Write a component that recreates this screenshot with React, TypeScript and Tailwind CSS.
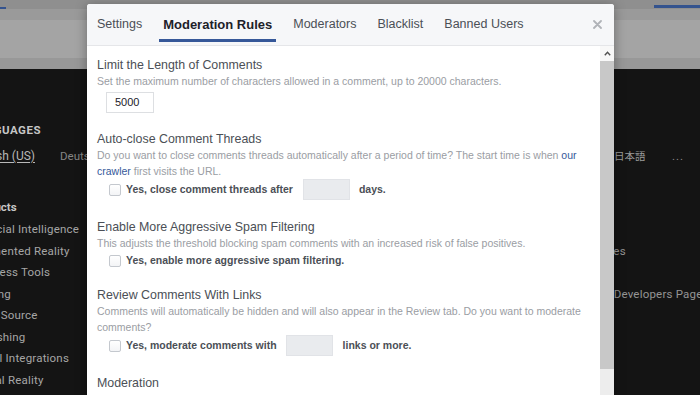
import React from 'react';

const tabs = ['Settings', 'Moderation Rules', 'Moderators', 'Blacklist', 'Banned Users'];

const products = [
  'Artificial Intelligence',
  'Augmented Reality',
  'Business Tools',
  'Gaming',
  'Open Source',
  'Publishing',
  'Social Integrations',
  'Virtual Reality',
];

const programs = ['Blog', 'Success Stories', 'Videos', 'Facebook for Developers Page', 'Events'];

const Check = () => (
  <span className="w-[12px] h-[12px] rounded-[2px] border border-[#c4c8ce] bg-gradient-to-b from-white to-[#f3f4f6] shrink-0" />
);

const GrayInput = ({ className = '' }: { className?: string }) => (
  <span className={`block w-[47px] h-[21px] bg-[#e9ebee] border border-[#e1e3e7] shrink-0 ${className}`} />
);

const App: React.FC = () => {
  return (
    <div className="relative w-[700px] h-[395px] overflow-hidden bg-[#141414] font-['Roboto',sans-serif]">
      {/* Page behind the dialog */}
      <div className="flex flex-col h-full">
        <div className="h-[9px] bg-[#8f8f8f] flex items-end justify-between">
          <span className="w-[6px] h-[2px] bg-[#34538e]" />
          <span className="w-[46px] h-[3px] mb-[1px] bg-[#34538e]" />
        </div>
        <div className="h-[11px] bg-[#9a9a9a]" />
        <div className="h-[38px] bg-[#a4a4a4]" />
        <div className="h-[11px] bg-[#989898]" />
        <div className="flex-1 bg-[#141414] pt-[53px] -ml-[30px] text-[11.5px]">
          <p className="leading-[16px] font-bold uppercase tracking-[0.5px] text-[#c6c6c6] text-[11.5px]">Languages</p>
          <div className="mt-[10px] grid grid-cols-[90px_554px_58px_auto] leading-[16px]">
            <span className="text-[#b8b8b8] underline underline-offset-2 text-[12px]">English (US)</span>
            <div className="flex gap-[28px] text-[#858585] whitespace-nowrap">
              <span>Deutsch</span>
              <span>Español</span>
              <span>Français (France)</span>
              <span>Italiano</span>
              <span>Português (Brasil)</span>
            </div>
            <span className="text-[#9c9c9c] text-[10.5px] font-['Noto_Sans_CJK_JP',sans-serif]">日本語</span>
            <span className="text-[#8a8a8a] tracking-[1px]">...</span>
          </div>
          <div className="mt-[35px] grid grid-cols-[571px_auto]">
            <div>
              <p className="leading-[16px] font-bold text-[#c6c6c6]">Products</p>
              <ul className="mt-[4px] text-[#a6a6a6] leading-[21.5px] tracking-[0.2px]">
                {products.map((p) => (
                  <li key={p}>{p}</li>
                ))}
              </ul>
            </div>
            <div className="whitespace-nowrap">
              <p className="leading-[16px] font-bold text-[#c6c6c6]">Programs</p>
              <ul className="mt-[4px] text-[#949494] leading-[21.5px] tracking-[0.2px]">
                {programs.map((p) => (
                  <li key={p}>{p}</li>
                ))}
              </ul>
            </div>
          </div>
        </div>
      </div>

      {/* Dialog */}
      <div className="absolute left-[87px] top-[4px] w-[527px] h-[420px] bg-white rounded-[3px] shadow-[0_2px_12px_rgba(0,0,0,0.35)] overflow-hidden flex flex-col font-['Liberation_Sans',Arial,sans-serif]">
        <div className="h-[42px] shrink-0 bg-[#f6f7f9] border-b border-[#e5e6e9] flex pl-[6px] pr-[12px]">
          <div className="flex gap-[13px]">
            {tabs.map((t, i) => (
              <div
                key={t}
                className={`relative flex items-center px-[4px] ${
                  i === 1 ? 'text-[13px] font-bold text-[#1d2129]' : 'text-[12.5px] text-[#4b4f56]'
                }`}
              >
                {t}
                {i === 1 && <span className="absolute left-0 right-0 bottom-[3px] h-[3px] bg-[#365899]" />}
              </div>
            ))}
          </div>
          <div className="ml-auto flex items-center text-[#b0b3b8]">
            <svg width="9" height="9" viewBox="0 0 9 9" fill="none" stroke="currentColor" strokeWidth="1.8" strokeLinecap="round">
              <path d="M1 1l7 7M8 1l-7 7" />
            </svg>
          </div>
        </div>

        <div className="flex-1 flex">
          <div className="flex-1 pl-[10px] pr-[10px] pt-[11px] text-[#4b4f56]">
            {/* Section 1 */}
            <section>
              <h3 className="text-[12.4px] leading-[16px]">Limit the Length of Comments</h3>
              <p className="text-[10.5px] leading-[16px] text-[#9a9da3]">
                Set the maximum number of characters allowed in a comment, up to 20000 characters.
              </p>
              <div className="mt-[3px] ml-[9px] w-[48px] h-[21px] border border-[#dddfe2] flex items-center pl-[8px] text-[11px] text-[#1d2129]">
                5000
              </div>
            </section>

            {/* Section 2 */}
            <section className="mt-[18px]">
              <h3 className="text-[12.4px] leading-[16px]">Auto-close Comment Threads</h3>
              <p className="text-[10.5px] leading-[16px] text-[#9a9da3]">
                Do you want to close comments threads automatically after a period of time? The start time is when{' '}
                <span className="text-[#365899]">our crawler</span> first visits the URL.
              </p>
              <div className="h-[21px] ml-[12px] flex items-center text-[10.5px] font-bold">
                <Check />
                <span className="ml-[5px]">Yes, close comment threads after</span>
                <GrayInput className="ml-[10px]" />
                <span className="ml-[9px]">days.</span>
              </div>
            </section>

            {/* Section 3 */}
            <section className="mt-[19px]">
              <h3 className="text-[12.4px] leading-[16px]">Enable More Aggressive Spam Filtering</h3>
              <p className="text-[10.5px] leading-[16px] text-[#9a9da3]">
                This adjusts the threshold blocking spam comments with an increased risk of false positives.
              </p>
              <div className="h-[20px] ml-[12px] flex items-center text-[10.5px] font-bold">
                <Check />
                <span className="ml-[5px]">Yes, enable more aggressive spam filtering.</span>
              </div>
            </section>

            {/* Section 4 */}
            <section className="mt-[16px]">
              <h3 className="text-[12.4px] leading-[16px]">Review Comments With Links</h3>
              <p className="text-[10.5px] leading-[16px] text-[#9a9da3]">
                Comments will automatically be hidden and will also appear in the Review tab. Do you want to moderate
                comments?
              </p>
              <div className="h-[21px] ml-[12px] flex items-center text-[10.5px] font-bold">
                <Check />
                <span className="ml-[5px]">Yes, moderate comments with</span>
                <GrayInput className="ml-[9px]" />
                <span className="ml-[10px]">links or more.</span>
              </div>
            </section>

            <section className="mt-[19px]">
              <h3 className="text-[12.4px] leading-[16px]">Moderation</h3>
            </section>
          </div>

          {/* Scrollbar */}
          <div className="w-[14px] shrink-0 flex flex-col">
            <div className="h-[15px] bg-[#f8f8f8] flex items-center justify-center text-[#505050]">
              <svg width="7" height="5" viewBox="0 0 7 5" fill="none" stroke="currentColor" strokeWidth="1.4">
                <path d="M0.8 4.2L3.5 1.3L6.2 4.2" />
              </svg>
            </div>
            <div className="h-[308px] bg-[#c8c8c8]" />
            <div className="flex-1 bg-[#ededed]" />
          </div>
        </div>
      </div>
    </div>
  );
};

export default App;
